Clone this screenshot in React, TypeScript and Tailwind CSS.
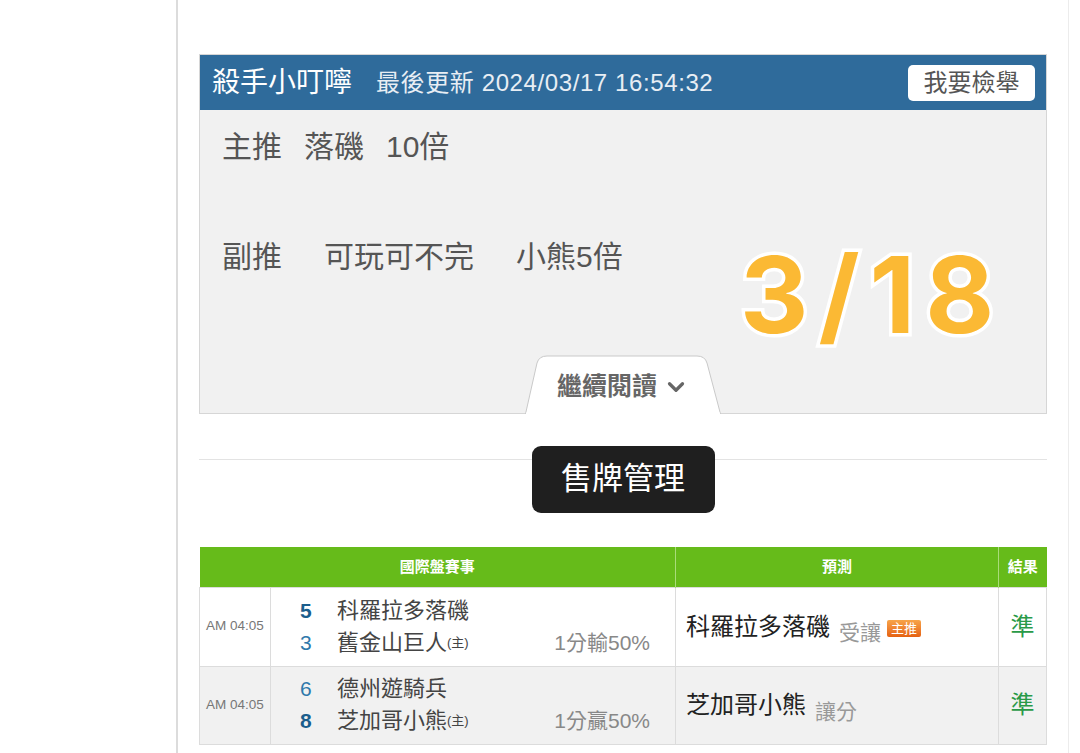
import { ChevronDown } from "lucide-react"

const FONT = "font-['Liberation_Sans','Noto_Sans_CJK_TC',sans-serif]"

const GAMES = [
  {
    time: "AM 04:05",
    away: { score: "5", name: "科羅拉多落磯", win: true },
    home: { score: "3", name: "舊金山巨人", win: false },
    line: "1分輸50%",
    pick: "科羅拉多落磯",
    pickNote: "受讓",
    main: true,
    result: "準",
    bg: "bg-white",
  },
  {
    time: "AM 04:05",
    away: { score: "6", name: "德州遊騎兵", win: false },
    home: { score: "8", name: "芝加哥小熊", win: true },
    line: "1分贏50%",
    pick: "芝加哥小熊",
    pickNote: "讓分",
    main: false,
    result: "準",
    bg: "bg-[#f1f1f1]",
  },
]

function ReadMoreTab() {
  return (
    <div className="relative -mb-px flex h-[59px] w-[196px] items-center justify-center pt-1">
      <svg className="absolute inset-0 h-full w-full" viewBox="0 0 196 59" preserveAspectRatio="none">
        <path
          d="M0.5 59 L12 8 Q14 1 22 1 L172 1 Q180 1 182 8 L195.5 59 Z"
          fill="#ffffff"
          stroke="#c9c9c9"
          strokeWidth="1"
        />
        <line x1="1" y1="58.5" x2="195" y2="58.5" stroke="#ffffff" strokeWidth="2" />
      </svg>
      <span className="relative flex items-center gap-[6px] text-[25px] font-bold text-[#666]">
        繼續閱讀
        <ChevronDown className="size-[26px] text-[#666]" strokeWidth={3} />
      </span>
    </div>
  )
}

function TipCard() {
  return (
    <div className="border border-[#d6d6d6]">
      <div className="flex h-[55px] items-center bg-[#2f6b9b] pl-3 pr-[11px] text-white">
        <span className="text-[28px]">殺手小叮嚀</span>
        <span className="ml-[24px] text-[24px] tracking-[0.6px] text-[#e8eef4]">最後更新 2024/03/17 16:54:32</span>
        <button className="ml-auto h-[36px] w-[127px] rounded-[5px] bg-white text-[24px] text-[#555]">
          我要檢舉
        </button>
      </div>
      <div className="relative flex h-[303px] flex-col bg-[#f1f1f1]">
        <div className="flex gap-[22px] pl-[22px] pt-[14px] text-[30px] text-[#555]">
          <span>主推</span>
          <span>落磯</span>
          <span>10倍</span>
        </div>
        <div className="mt-[65px] flex gap-[42px] pl-[22px] text-[30px] text-[#555]">
          <span>副推</span>
          <span>可玩可不完</span>
          <span>小熊5倍</span>
        </div>
        <div className="absolute left-[540px] top-[132px] font-['Inter',sans-serif] text-[106px] leading-none font-bold tracking-[10px] text-[#fbb934] [-webkit-text-stroke:7px_white] [paint-order:stroke_fill]">
          3/18
        </div>
        <div className="mt-auto flex justify-center">
          <ReadMoreTab />
        </div>
      </div>
    </div>
  )
}

function GamesTable() {
  return (
    <table className="w-full table-fixed border-collapse">
      <colgroup>
        <col className="w-[71px]" />
        <col className="w-[405px]" />
        <col className="w-[323px]" />
        <col className="w-[48px]" />
      </colgroup>
      <thead>
        <tr className="h-[40px] bg-[#66bb1a] text-[15px] font-bold text-white">
          <th colSpan={2} className="border-r border-[#a9dc7a] font-bold">國際盤賽事</th>
          <th className="border-r border-[#a9dc7a] font-bold">預測</th>
          <th className="font-bold">結果</th>
        </tr>
      </thead>
      <tbody>
        {GAMES.map((g, i) => (
          <tr key={i} className={`${g.bg} ${i === 0 ? "h-[79px]" : "h-[78px]"}`}>
            <td className="border border-[#dcdcdc] text-center text-[13.5px] text-[#777]">{g.time}</td>
            <td className="border border-[#dcdcdc] pl-[29px] pr-[25px]">
              <div className="flex flex-col text-[22px] leading-[32px] text-[#444]">
                <div className="flex items-center">
                  <span className={`w-[37px] text-[21px] ${g.away.win ? "font-bold text-[#1b5e8c]" : "text-[#2f79ab]"}`}>
                    {g.away.score}
                  </span>
                  <span>{g.away.name}</span>
                </div>
                <div className="flex items-center">
                  <span className={`w-[37px] text-[21px] ${g.home.win ? "font-bold text-[#1b5e8c]" : "text-[#2f79ab]"}`}>
                    {g.home.score}
                  </span>
                  <span>{g.home.name}</span>
                  <span className="text-[13px]">(主)</span>
                  <span className="ml-auto text-[21px] text-[#888]">{g.line}</span>
                </div>
              </div>
            </td>
            <td className="border border-[#dcdcdc] pl-[10px]">
              <div className="flex items-end gap-[9px]">
                <span className="text-[24px] text-[#222]">{g.pick}</span>
                <span className="-mb-[4px] text-[21px] text-[#999]">{g.pickNote}</span>
                {g.main && (
                  <span className="mb-[8px] -ml-[3px] rounded-[2px] bg-gradient-to-b from-[#f7a449] to-[#e5610f] px-[4px] text-[13px] leading-[17px] text-white">
                    主推
                  </span>
                )}
              </div>
            </td>
            <td className="border border-[#dcdcdc] text-center text-[24px] text-[#2a9a48]">{g.result}</td>
          </tr>
        ))}
      </tbody>
    </table>
  )
}

export default function App() {
  return (
    <div className={`${FONT} h-[753px] overflow-hidden bg-white`}>
      <div className="ml-[176px] h-full w-[893px] border-l-2 border-r border-l-[#dcdcdc] border-r-[#ececec] px-[21px] pt-[54px]">
        <TipCard />
        <div className="relative mt-[45px] flex justify-center">
          <div className="absolute inset-x-0 top-0 border-t border-[#e3e3e3]" />
          <button className="relative -mt-[13px] h-[67px] w-[183px] rounded-[9px] bg-[#1f1f1f] text-[31px] text-white">
            售牌管理
          </button>
        </div>
        <div className="mt-[34px]">
          <GamesTable />
        </div>
      </div>
    </div>
  )
}
